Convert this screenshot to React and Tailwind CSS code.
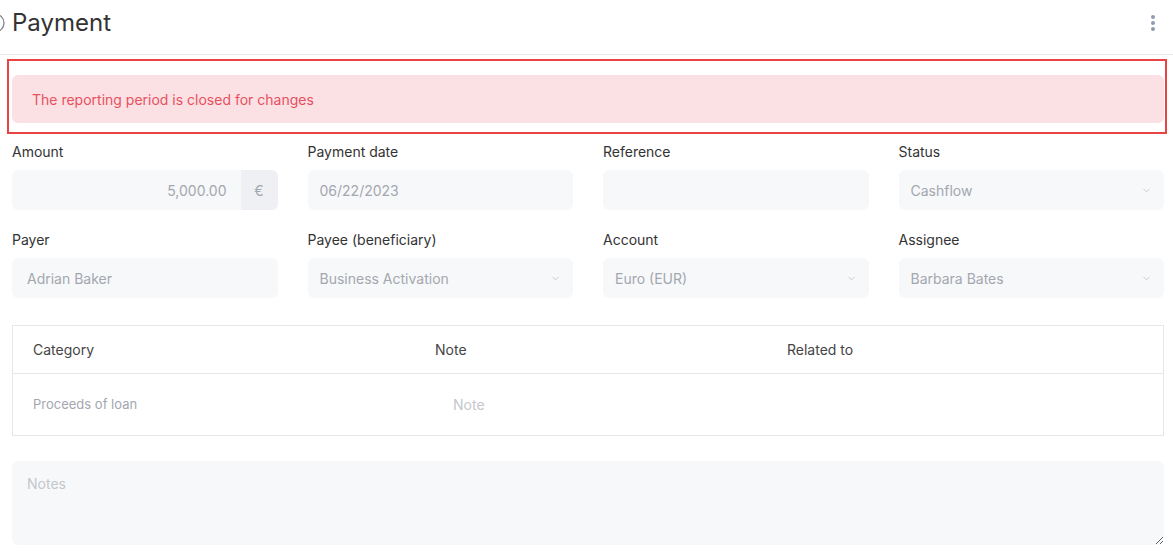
import React from 'react';
import { ChevronDown } from 'lucide-react';

const font = { fontFamily: 'Inter, "Noto Sans", sans-serif' };

function Label({ children }) {
  return <div className="text-[14px] leading-5 text-[#333] mb-2">{children}</div>;
}

function Input({ value, placeholder, pad = 'px-3' }) {
  return (
    <div className={`h-10 rounded-md bg-[#f7f8fa] ${pad} flex items-center text-[14px] text-[#a3a7ae]`}>
      {value || <span className="text-[#c4c7cc]">{placeholder}</span>}
    </div>
  );
}

function Select({ value }) {
  return (
    <div className="h-10 rounded-md bg-[#f7f8fa] pl-3 pr-[12px] flex items-center justify-between text-[14px] text-[#a3a7ae]">
      <span>{value}</span>
      <ChevronDown size={11} strokeWidth={2} className="text-[#c4c7cc]" />
    </div>
  );
}

export default function App() {
  return (
    <div className="w-[1173px] h-[552px] overflow-hidden bg-white" style={font}>
      {/* Header */}
      <div className="h-[55px] border-b border-[#e6e7eb] flex items-center pl-3 pr-[18px]">
        <svg width="20" height="20" viewBox="0 0 20 20" className="-ml-[27px] mr-[7px] mb-[8px]">
          <circle cx="10" cy="10" r="9" fill="none" stroke="#7d838c" strokeWidth="1.3" />
        </svg>
        <h1 className="text-[24px] leading-8 text-[#333] font-normal mb-[9px]">Payment</h1>
        <div className="ml-auto mb-[9px] flex flex-col gap-[2px] items-center">
          <span className="w-[4px] h-[4px] rounded-full bg-[#8f9bb0]" />
          <span className="w-[4px] h-[4px] rounded-full bg-[#8f9bb0]" />
          <span className="w-[4px] h-[4px] rounded-full bg-[#8f9bb0]" />
        </div>
      </div>

      <div className="pl-3 pr-[9px] pt-1">
        {/* Alert (highlighted) */}
        <div className="border-2 border-[#ea4343] -ml-[5px] -mr-[3px] pl-[3px] pr-[1px] pt-[14px] pb-[9px]">
          <div className="h-[48px] rounded-md bg-[#fbe1e4] px-5 flex items-center text-[14px] text-[#e8505f]">
            The reporting period is closed for changes
          </div>
        </div>

        {/* Form grid */}
        <div className="grid grid-cols-4 gap-x-[30px] gap-y-[20px] mt-[8px]">
          <div>
            <Label>Amount</Label>
            <div className="h-10 rounded-md bg-[#f7f8fa] flex overflow-hidden text-[14px] text-[#a3a7ae]">
              <div className="flex-1 flex items-center justify-end pr-[14px]">5,000.00</div>
              <div className="w-[37px] bg-[#eff0f3] flex items-center justify-center">€</div>
            </div>
          </div>
          <div>
            <Label>Payment date</Label>
            <Input value="06/22/2023" />
          </div>
          <div>
            <Label>Reference</Label>
            <Input value="" />
          </div>
          <div>
            <Label>Status</Label>
            <Select value="Cashflow" />
          </div>
          <div>
            <Label>Payer</Label>
            <Input value="Adrian Baker" pad="px-[15px]" />
          </div>
          <div>
            <Label>Payee (beneficiary)</Label>
            <Select value="Business Activation" />
          </div>
          <div>
            <Label>Account</Label>
            <Select value="Euro (EUR)" />
          </div>
          <div>
            <Label>Assignee</Label>
            <Select value="Barbara Bates" />
          </div>
        </div>

        {/* Category table */}
        <div className="mt-[27px] border border-[#e6e7eb]">
          <div className="h-12 flex items-center text-[14px] text-[#444] border-b border-[#e6e7eb]">
            <div className="w-[402px] pl-5">Category</div>
            <div className="w-[352px] pl-5">Note</div>
            <div className="flex-1 pl-5">Related to</div>
          </div>
          <div className="h-[61px] flex items-center text-[13px]">
            <div className="w-[402px] pl-5 text-[#a3a7ae]">Proceeds of loan</div>
            <div className="w-[352px] pl-[38px] text-[14px] text-[#c4c7cc]">Note</div>
            <div className="flex-1" />
          </div>
        </div>

        {/* Notes */}
        <textarea
          className="mt-[25px] block w-full h-[84px] rounded-md bg-[#f7f8fa] px-[15px] py-[12px] text-[14px] text-[#555] placeholder:text-[#c4c7cc] focus:outline-none"
          placeholder="Notes"
          readOnly
        />
      </div>
    </div>
  );
}
